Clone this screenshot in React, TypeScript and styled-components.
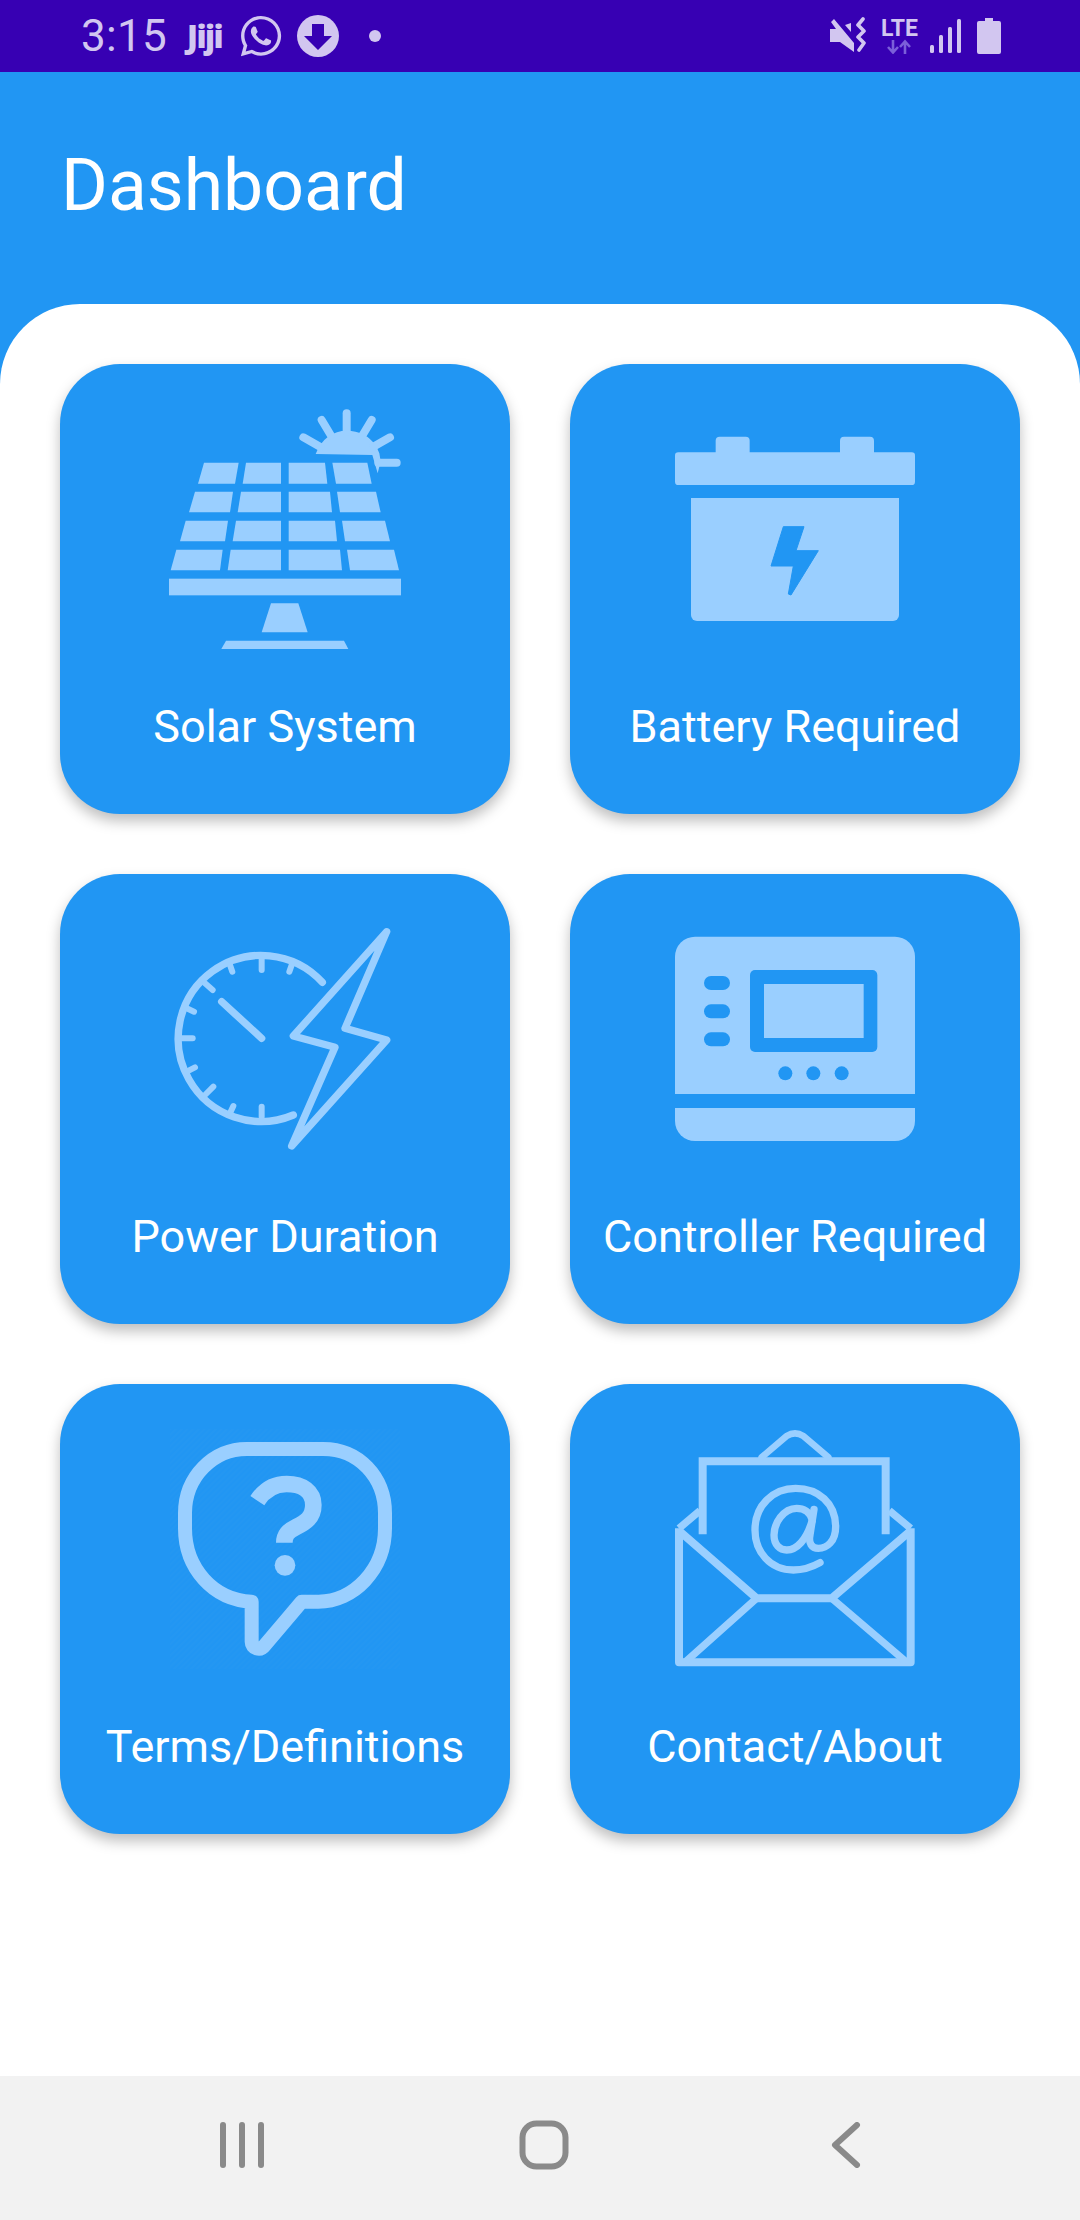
import React from 'react';
import styled, { createGlobalStyle } from 'styled-components';
import { FaWhatsapp } from 'react-icons/fa';

const BLUE = '#2196F3';
const LIGHT = '#9ACFFF';
const STATUS_TEXT = '#D2C6F0';

const GlobalStyle = createGlobalStyle`
  html, body {
    margin: 0;
    padding: 0;
    background: #fff;
    font-family: Roboto, "Liberation Sans", sans-serif;
  }
`;

const Screen = styled.div`
  width: 1080px;
  height: 2220px;
  display: flex;
  flex-direction: column;
  overflow: hidden;
`;

const StatusBar = styled.div`
  height: 72px;
  flex: none;
  background: #3700b3;
  color: ${STATUS_TEXT};
  display: flex;
  align-items: center;
  justify-content: space-between;
  padding: 0 79px 0 81px;
`;

const StatusGroup = styled.div`
  display: flex;
  align-items: center;
`;

const Time = styled.span`
  font-size: 44px;
  font-weight: 400;
  line-height: 72px;
  letter-spacing: 0.3px;
`;

const Jiji = styled.span`
  font-family: "Open Sans", sans-serif;
  font-size: 31px;
  font-weight: 800;
  letter-spacing: -1.5px;
  margin-left: 20px;
  margin-right: 16px;
  line-height: 72px;
`;

const WhatsApp = styled(FaWhatsapp)`
  display: block;
  font-size: 46px;
  margin-right: 13px;
`;

const Dot = styled.span`
  width: 12px;
  height: 12px;
  border-radius: 50%;
  background: ${STATUS_TEXT};
  margin-left: 30px;
`;

const LteBox = styled.div`
  display: flex;
  flex-direction: column;
  align-items: center;
  margin: 0 12px 0 13px;
`;

const LteText = styled.span`
  font-size: 23px;
  font-weight: 700;
  line-height: 20px;
`;

const Main = styled.div`
  flex: 1;
  display: flex;
  flex-direction: column;
  background: ${BLUE};
`;

const AppBar = styled.header`
  height: 232px;
  flex: none;
  display: flex;
  align-items: center;
  padding-left: 61px;
  padding-bottom: 6px;
  box-sizing: border-box;
`;

const Title = styled.h1`
  margin: 0;
  color: #fff;
  font-size: 71.5px;
  font-weight: 400;
`;

const Sheet = styled.main`
  flex: 1;
  background: #fff;
  border-radius: 80px 80px 0 0;
  padding: 60px;
`;

const CardGrid = styled.div`
  display: grid;
  grid-template-columns: 450px 450px;
  grid-auto-rows: 450px;
  gap: 60px;
`;

const Card = styled.div`
  background: ${BLUE};
  border-radius: 60px;
  box-shadow: 0 7px 14px rgba(0, 0, 0, 0.26);
  display: flex;
  flex-direction: column;
  align-items: center;
  padding-top: 45px;
  box-sizing: border-box;
`;

const CardLabel = styled.div`
  margin-top: 51px;
  color: #fff;
  font-size: 45px;
  line-height: 54px;
  white-space: nowrap;
`;

const Art = styled.svg`
  width: 240px;
  height: 240px;
  display: block;
  flex: none;
`;

const NavBar = styled.nav`
  height: 144px;
  flex: none;
  background: #f2f2f2;
  display: grid;
  grid-template-columns: repeat(3, 302px);
  align-items: center;
  justify-items: center;
  box-sizing: border-box;
  padding: 0 0 6px 91px;
`;

// top/bottom x extents for each solar cell, per row
const solarRows = [
  { y: [218, 281], cols: [[192, 296, 174, 285], [318, 423, 308, 423], [446, 555, 446, 562], [577, 682, 588, 695]] },
  { y: [305, 367], cols: [[165, 279, 147, 270], [303, 423, 293, 423], [446, 570, 446, 576], [591, 708, 600, 722]] },
  { y: [392, 454], cols: [[137, 264, 120, 255], [288, 423, 278, 423], [446, 585, 446, 591], [606, 735, 615, 750]] },
  { y: [479, 541], cols: [[109, 248, 92, 240], [272, 423, 263, 423], [446, 600, 446, 606], [621, 762, 630, 777]] },
];

const SolarIcon = () => (
  <Art viewBox="75 57 720 720">
    <g fill={LIGHT}>
      {solarRows.map((row) =>
        row.cols.map((c) => (
          <polygon
            key={`${row.y[0]}-${c[0]}`}
            points={`${c[0]},${row.y[0]} ${c[1]},${row.y[0]} ${c[3]},${row.y[1]} ${c[2]},${row.y[1]}`}
          />
        ))
      )}
      <rect x="87" y="566" width="696" height="50" />
      <polygon points="393,640 475,640 503,727 365,727" />
      <polygon points="258,752 612,752 625,777 244,777" />
      <path d="M527 192 C545 145 580 122 620 122 C670 122 705 150 718 190 L722 214 L713 250 L697 195 Z" />
    </g>
    <g stroke={LIGHT} strokeWidth="24" strokeLinecap="round" fill="none">
      <path d="M620 70 V125" />
      <path d="M545 90 L572 135" />
      <path d="M695 90 L668 135" />
      <path d="M490 142 L540 170" />
      <path d="M750 142 L700 170" />
      <path d="M715 218 H770" />
    </g>
  </Art>
);

const BatteryIcon = () => (
  <Art viewBox="75 -3 720 720">
    <g fill={LIGHT}>
      <rect x="197" y="80" width="102" height="70" rx="12" />
      <rect x="570" y="80" width="102" height="70" rx="12" />
      <rect x="75" y="127" width="720" height="98" rx="10" />
      <path d="M123 264 H747 V615 a18 18 0 0 1 -18 18 H141 a18 18 0 0 1 -18 -18 Z" />
    </g>
    <path
      d="M400 350 H462 L438 422 H505 L423 555 L415 552 L430 468 H363 Z"
      fill={BLUE}
      stroke={BLUE}
      strokeWidth="3"
      strokeLinejoin="round"
    />
  </Art>
);

const ClockBoltIcon = () => (
  <Art viewBox="45 27 720 720">
    <g stroke={LIGHT} strokeWidth="22" strokeLinecap="round" strokeLinejoin="round" fill="none">
      <path d="M517 217 A249 249 0 1 0 430 615" />
      <path d="M335 145 V180" strokeWidth="18" />
      <path d="M240 165 L247 185" strokeWidth="18" />
      <path d="M425 165 L418 185" strokeWidth="18" />
      <path d="M165 220 L188 240" strokeWidth="18" />
      <path d="M110 295 L132 305" strokeWidth="18" />
      <path d="M90 385 H128" strokeWidth="18" />
      <path d="M110 485 L135 472" strokeWidth="18" />
      <path d="M165 555 L190 530" strokeWidth="18" />
      <path d="M240 610 L250 588" strokeWidth="18" />
      <path d="M335 620 V590" strokeWidth="18" />
      <path d="M215 275 L335 385" />
      <path d="M710 65 L430 378 L555 412 L425 708 L710 390 L585 355 Z" />
    </g>
  </Art>
);

const ControllerIcon = () => (
  <Art viewBox="75 -3 720 720">
    <path d="M75 522 V110 a60 60 0 0 1 60 -60 H735 a60 60 0 0 1 60 60 V522 Z" fill={LIGHT} />
    <path d="M75 564 H795 V603 a60 60 0 0 1 -60 60 H135 a60 60 0 0 1 -60 -60 Z" fill={LIGHT} />
    <rect x="300" y="150" width="382" height="246" rx="15" fill={BLUE} />
    <rect x="342" y="192" width="299" height="162" fill={LIGHT} />
    <g fill={BLUE}>
      <rect x="162" y="168" width="78" height="42" rx="21" />
      <rect x="162" y="253" width="78" height="42" rx="21" />
      <rect x="162" y="337" width="78" height="42" rx="21" />
      <circle cx="406" cy="460" r="21" />
      <circle cx="490" cy="460" r="21" />
      <circle cx="575" cy="460" r="21" />
    </g>
  </Art>
);

const HelpIcon = () => (
  <Art viewBox="45 27 720 720">
    <defs>
      <pattern id="hatch" width="12" height="12" patternUnits="userSpaceOnUse" patternTransform="rotate(45)">
        <rect width="5" height="12" fill="#2C9AF0" />
      </pattern>
    </defs>
    <rect x="60" y="27" width="690" height="720" fill="url(#hatch)" opacity="0.3" />
    <path
      d="M290 87 H520 C625 87 705 170 705 280 V325 C705 450 610 545 505 545 H455 L345 675 C330 695 305 685 305 665 V545 C190 540 105 445 105 325 V280 C105 170 190 87 290 87 Z"
      fill="none"
      stroke={LIGHT}
      strokeWidth="42"
      strokeLinejoin="round"
    />
    <path
      d="M322 242 C345 207 375 192 410 192 C458 192 490 215 490 255 C490 293 465 308 440 320 C414 333 403 345 403 368"
      fill="none"
      stroke={LIGHT}
      strokeWidth="50"
    />
    <circle cx="405" cy="436" r="31" fill={LIGHT} />
  </Art>
);

const MailIcon = () => (
  <Art viewBox="75 27 720 720">
    <g stroke={LIGHT} fill="none" strokeLinejoin="round">
      <path strokeWidth="24" d="M87 325 V727 H782 V325" />
      <path strokeWidth="24" d="M87 332 L320 535 H545 L782 332" />
      <path strokeWidth="22" d="M105 727 L320 535 M545 535 L770 727" />
      <path strokeWidth="22" d="M87 325 L150 272 M782 325 L718 272" />
      <path strokeWidth="24" strokeLinejoin="miter" d="M158 343 V124 H707 V343" />
      <path strokeWidth="20" strokeLinecap="round" d="M335 112 L410 48 Q435 32 460 48 L535 112" />
      <path
        strokeWidth="22"
        strokeLinecap="round"
        d="M510 428 C480 445 455 450 430 450 C360 450 315 395 315 330 C315 255 370 205 437 205 C505 205 557 250 557 320 C557 365 530 385 505 385 C485 385 475 370 480 345 L492 268"
      />
      <path
        strokeWidth="22"
        d="M487 300 C480 275 460 265 440 265 C400 265 372 310 372 345 C372 375 390 390 410 390 C440 390 470 360 487 300"
      />
    </g>
  </Art>
);

const cards = [
  { label: 'Solar System', Icon: SolarIcon },
  { label: 'Battery Required', Icon: BatteryIcon },
  { label: 'Power Duration', Icon: ClockBoltIcon },
  { label: 'Controller Required', Icon: ControllerIcon },
  { label: 'Terms/Definitions', Icon: HelpIcon },
  { label: 'Contact/About', Icon: MailIcon },
];

const StatusIcon = styled.svg`
  display: block;
  flex: none;
`;

const DownloadBadge = () => (
  <StatusIcon width="42" height="44" viewBox="0 0 42 44">
    <circle cx="21" cy="22" r="21" fill={STATUS_TEXT} />
    <path d="M15 10 H27 V22 H35 L21 36 L7 22 H15 Z" fill="#3700b3" />
  </StatusIcon>
);

const MuteVibrate = () => (
  <StatusIcon width="38" height="38" viewBox="0 0 38 38">
    <path d="M0 12 H6 L1 5 L4 2 L24 26 V35 L10 25 H0 Z" fill={STATUS_TEXT} />
    <path d="M21 6 V15 L15 8 Z" fill={STATUS_TEXT} />
    <path
      d="M33 2 L28 8 L34 14 L28 20 L34 26 L29 33"
      fill="none"
      stroke={STATUS_TEXT}
      strokeWidth="3.6"
      strokeLinecap="round"
      strokeLinejoin="round"
    />
  </StatusIcon>
);

const DataArrows = () => (
  <StatusIcon width="26" height="15" viewBox="0 0 26 15">
    <path d="M7 1 V13 M2 8 L7 13.5 L12 8" stroke="#7B5FD9" strokeWidth="2.6" fill="none" />
    <path d="M19 15 V3 M14 8 L19 2.5 L24 8" stroke="#7B5FD9" strokeWidth="2.6" fill="none" />
  </StatusIcon>
);

const Signal = () => (
  <StatusIcon width="31" height="34" viewBox="0 0 31 34">
    <g fill={STATUS_TEXT}>
      <rect x="0" y="26" width="4" height="8" rx="1.5" />
      <rect x="9" y="16" width="4" height="18" rx="1.5" />
      <rect x="18" y="8" width="4" height="26" rx="1.5" />
      <rect x="27" y="0" width="4" height="34" rx="1.5" />
    </g>
  </StatusIcon>
);

const BatteryGlyph = styled(StatusIcon)`
  margin-left: 16px;
`;

const Battery = () => (
  <BatteryGlyph width="24" height="36" viewBox="0 0 24 36">
    <path
      d="M8 0 H16 V3 H22 a2 2 0 0 1 2 2 V34 a2 2 0 0 1 -2 2 H2 a2 2 0 0 1 -2 -2 V5 a2 2 0 0 1 2 -2 H8 Z"
      fill={STATUS_TEXT}
    />
  </BatteryGlyph>
);

const NavRecents = () => (
  <svg width="46" height="46" viewBox="0 0 46 46">
    <g stroke="#8a8a8a" strokeWidth="6" strokeLinecap="round">
      <path d="M4 3 V43" />
      <path d="M23 3 V43" />
      <path d="M42 3 V43" />
    </g>
  </svg>
);

const NavHome = () => (
  <svg width="50" height="50" viewBox="0 0 50 50">
    <rect x="3.5" y="3.5" width="43" height="43" rx="14" fill="none" stroke="#8a8a8a" strokeWidth="6" />
  </svg>
);

const NavBack = () => (
  <svg width="30" height="46" viewBox="0 0 30 46">
    <path
      d="M26 3 L4 23 L26 43"
      fill="none"
      stroke="#8a8a8a"
      strokeWidth="6"
      strokeLinecap="round"
      strokeLinejoin="round"
    />
  </svg>
);

const App = () => (
  <Screen>
    <GlobalStyle />
    <StatusBar>
      <StatusGroup>
        <Time>3:15</Time>
        <Jiji>Jiji</Jiji>
        <WhatsApp />
        <DownloadBadge />
        <Dot />
      </StatusGroup>
      <StatusGroup>
        <MuteVibrate />
        <LteBox>
          <LteText>LTE</LteText>
          <DataArrows />
        </LteBox>
        <Signal />
        <Battery />
      </StatusGroup>
    </StatusBar>
    <Main>
      <AppBar>
        <Title>Dashboard</Title>
      </AppBar>
      <Sheet>
        <CardGrid>
          {cards.map(({ label, Icon }) => (
            <Card key={label}>
              <Icon />
              <CardLabel>{label}</CardLabel>
            </Card>
          ))}
        </CardGrid>
      </Sheet>
    </Main>
    <NavBar>
      <NavRecents />
      <NavHome />
      <NavBack />
    </NavBar>
  </Screen>
);

export default App;
